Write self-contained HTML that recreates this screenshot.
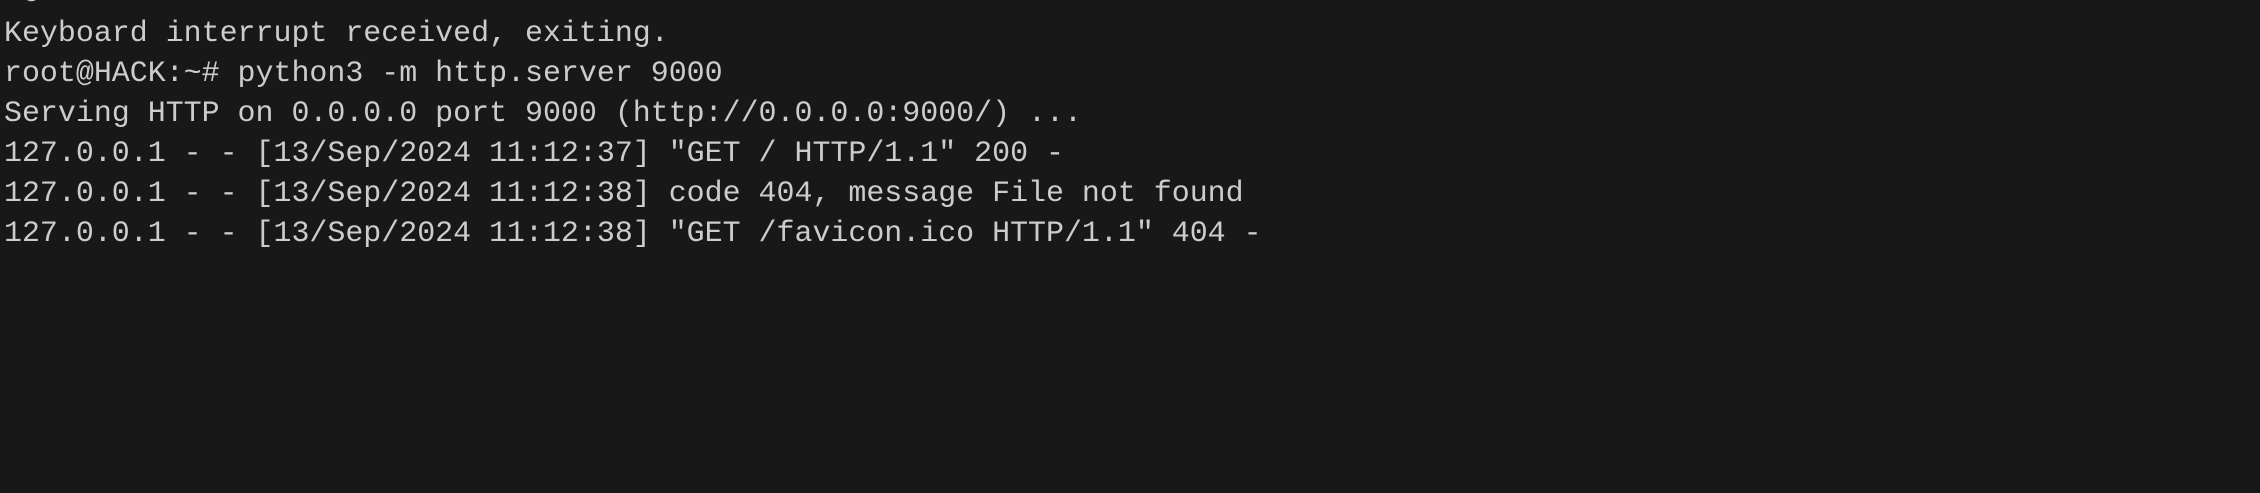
<!DOCTYPE html>
<html><head><style>
html,body{margin:0;padding:0;width:2260px;height:493px;background:#181818;overflow:hidden}
pre{position:absolute;left:4px;top:-27px;margin:0;font-family:"Liberation Mono",monospace;font-size:29.95px;line-height:40px;color:#cccccc;white-space:pre}
</style></head><body>
<pre>^C
Keyboard interrupt received, exiting.
root@HACK:~# python3 -m http.server 9000
Serving HTTP on 0.0.0.0 port 9000 (http://0.0.0.0:9000/) ...
127.0.0.1 - - [13/Sep/2024 11:12:37] "GET / HTTP/1.1" 200 -
127.0.0.1 - - [13/Sep/2024 11:12:38] code 404, message File not found
127.0.0.1 - - [13/Sep/2024 11:12:38] "GET /favicon.ico HTTP/1.1" 404 -</pre>
</body></html>
